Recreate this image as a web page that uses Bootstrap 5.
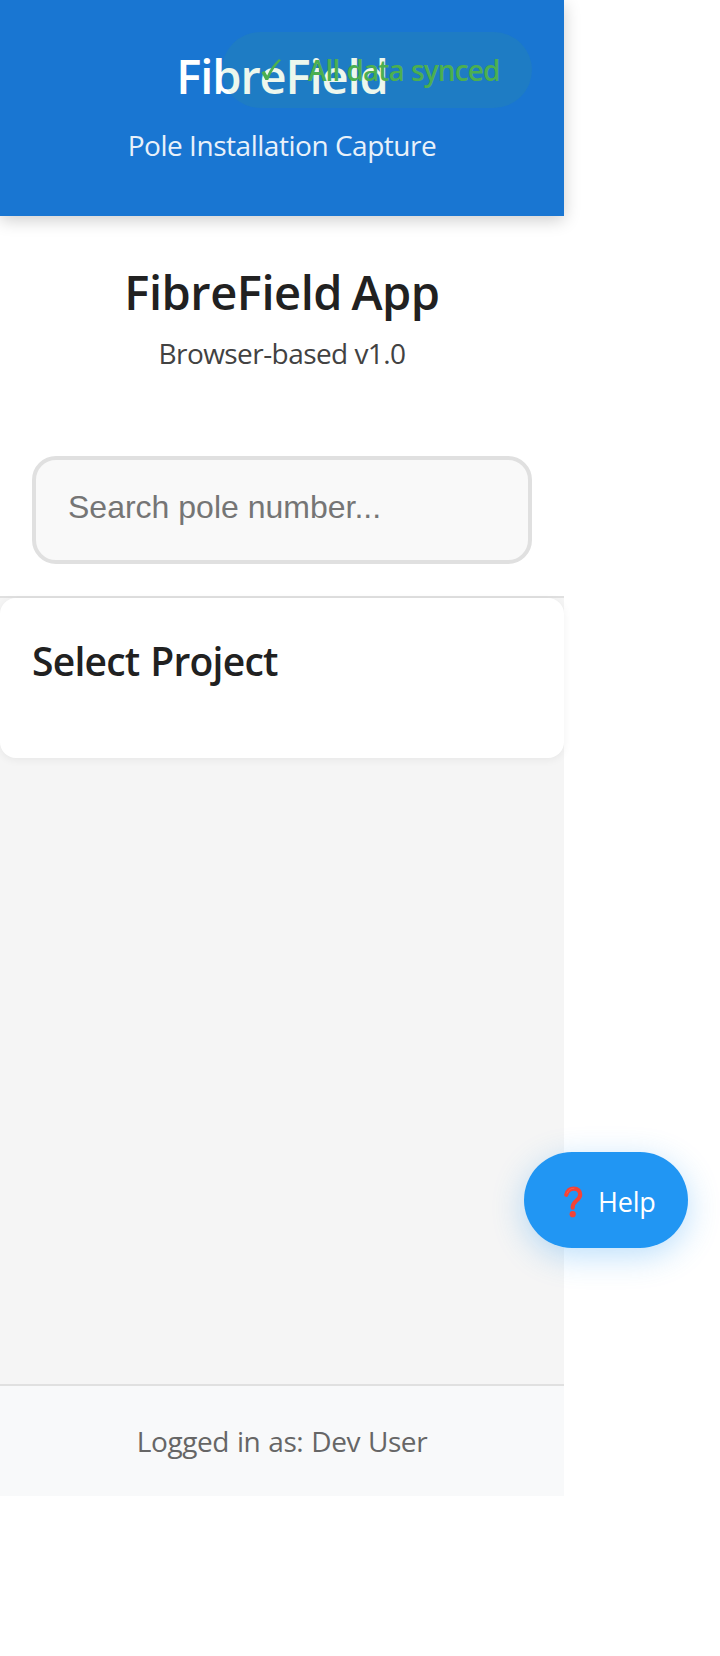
<!DOCTYPE html>
<html lang="en">
<head>
<meta charset="utf-8">
<meta name="viewport" content="width=device-width, initial-scale=1">
<title>FibreField</title>
<link href="https://cdn.jsdelivr.net/npm/bootstrap@5.3.0/dist/css/bootstrap.min.css" rel="stylesheet">
<style>
body{font-family:"Open Sans","Noto Sans",sans-serif;background:#fff;color:#212121;font-size:28px}
.app{width:564px;height:1496px;background:#f5f5f5}
.top{height:216px;background:#1976d2;box-shadow:0 4px 16px rgba(0,0,0,.2);padding-top:44px;z-index:2}
.title{font-size:47px;font-weight:600;line-height:64px;margin:0;white-space:nowrap;letter-spacing:-.45px;word-spacing:-2.5px}
.top .title{letter-spacing:-1.1px}
.sub{line-height:40px;white-space:nowrap;margin:0;letter-spacing:-.56px}
.top .sub{margin-top:17px;opacity:.9;letter-spacing:-.47px}
.sync{left:222px;top:32px;width:310px;height:76px;border-radius:38px;background:rgba(76,175,80,.1);color:#4caf50;font-weight:600;padding-left:39px;gap:26px;white-space:nowrap;letter-spacing:-.9px;word-spacing:.7px}
.intro{height:382px;border-bottom:2px solid #e0e0e0;padding:44px 32px 0}
.intro .sub{color:#424242;margin-top:9px}
.search-box{height:108px;margin-top:83px;border:4px solid #e0e0e0;border-radius:24px;background:#f9f9f9;padding:0 32px 6px;font:32px "Liberation Sans",sans-serif}
.search-box:focus{background:#f9f9f9}
.search-box::placeholder{color:#757575}
.project{height:160px;border-radius:16px;padding:33px 32px;box-shadow:0 2px 8px rgba(0,0,0,.06)}
.project h2{font-size:39px;font-weight:600;line-height:60px;margin:0;white-space:nowrap;letter-spacing:-.75px;word-spacing:1.3px}
.foot{height:112px;border-top:2px solid #e0e0e0;background:#f8f9fa;color:#666;white-space:nowrap;letter-spacing:-.42px;word-spacing:1.1px}
.help{left:524px;top:1152px;width:164px;height:96px;border-radius:48px;background:#2196f3;box-shadow:0 8px 32px rgba(33,150,243,.3);border:0;color:#fff;font-size:27px;padding:4px 0 0 40px;gap:15px;z-index:3;letter-spacing:-.2px}
</style>
</head>
<body>
<div class="app d-flex flex-column position-relative">
  <header class="top text-white text-center position-relative">
    <h1 class="title">FibreField</h1>
    <p class="sub">Pole Installation Capture</p>
    <div class="sync position-absolute d-flex align-items-center">
      <svg width="21" height="24" viewBox="0 0 21 24" aria-hidden="true"><path d="M.5 14.5 3.5 12.8 6.2 17.6C9 10.8 13 5.5 17.8 1.2L20 2C14 8.2 10 14.2 7.2 22H4.4Z" fill="#4caf50"/></svg>
      <span>All data synced</span>
    </div>
  </header>
  <section class="intro bg-white text-center">
    <h2 class="title">FibreField App</h2>
    <p class="sub">Browser-based v1.0</p>
    <input class="search-box form-control" type="text" placeholder="Search pole number...">
  </section>
  <main class="flex-grow-1">
    <section class="project bg-white"><h2>Select Project</h2></section>
  </main>
  <footer class="foot d-flex align-items-center justify-content-center"><span>Logged in as: Dev User</span></footer>
  <button class="help position-absolute d-flex align-items-center" type="button">
    <svg width="19" height="32" viewBox="0 0 19 32" aria-hidden="true"><path d="M2.3 8.8C3.2 4.8 5.8 2.6 9.8 2.6c4 0 6.4 2.4 6.4 5.9 0 6-8 6.3-7.5 13.2" fill="none" stroke="#f44336" stroke-width="4.2" stroke-linecap="round"/><path d="M3 7.2C4.5 3.8 7 2.1 10 2.2" fill="none" stroke="#fa5c4d" stroke-width="1" stroke-linecap="round"/><circle cx="8.7" cy="28.2" r="3.1" fill="#f44336"/></svg>
    <span>Help</span>
  </button>
</div>
<script src="https://cdn.jsdelivr.net/npm/bootstrap@5.3.0/dist/js/bootstrap.bundle.min.js"></script>
</body>
</html>
